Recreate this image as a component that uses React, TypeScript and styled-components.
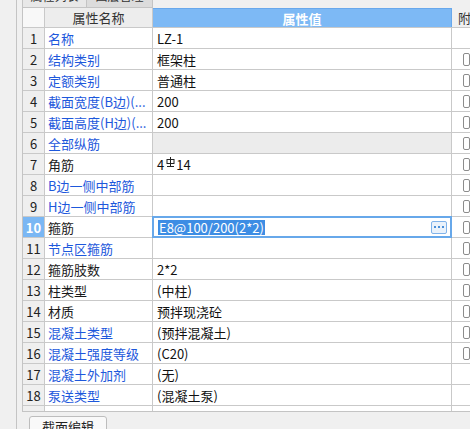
import { FC } from "react";

import styled, { createGlobalStyle, css } from "styled-components";

interface Attr {
  name: string;
  value?: string;
  isPublic?: boolean;
  hasCheck?: boolean;
  locked?: boolean;
  rebar?: boolean;
  editing?: boolean;
}

const attrs: Attr[] = [
  { name: "名称", value: "LZ-1", isPublic: true },
  { name: "结构类别", value: "框架柱", isPublic: true, hasCheck: true },
  { name: "定额类别", value: "普通柱", isPublic: true, hasCheck: true },
  { name: "截面宽度(B边)(...", value: "200", isPublic: true, hasCheck: true },
  { name: "截面高度(H边)(...", value: "200", isPublic: true, hasCheck: true },
  { name: "全部纵筋", isPublic: true, hasCheck: true, locked: true },
  { name: "角筋", value: "4", rebar: true, hasCheck: true },
  { name: "B边一侧中部筋", isPublic: true, hasCheck: true },
  { name: "H边一侧中部筋", isPublic: true, hasCheck: true },
  { name: "箍筋", value: "E8@100/200(2*2)", hasCheck: true, editing: true },
  { name: "节点区箍筋", isPublic: true, hasCheck: true },
  { name: "箍筋肢数", value: "2*2", hasCheck: true },
  { name: "柱类型", value: "(中柱)", hasCheck: true },
  { name: "材质", value: "预拌现浇砼", hasCheck: true },
  { name: "混凝土类型", value: "(预拌混凝土)", isPublic: true, hasCheck: true },
  { name: "混凝土强度等级", value: "(C20)", isPublic: true, hasCheck: true },
  { name: "混凝土外加剂", value: "(无)", isPublic: true },
  { name: "泵送类型", value: "(混凝土泵)", isPublic: true },
];

// HRB400 steel grade mark, not in any installed font
const RebarMark: FC = () => (
  <Mark width="9" height="10" viewBox="0 0 9 10">
    <rect x="1" y="2.5" width="7" height="4" fill="none" stroke="#222" strokeWidth="1" />
    <line x1="4.5" y1="0" x2="4.5" y2="9" stroke="#222" strokeWidth="1" />
    <line x1="1" y1="9.5" x2="8" y2="9.5" stroke="#222" strokeWidth="1" />
  </Mark>
);

const App: FC = () => {
  return (
    <>
      <GlobalStyle />
      <Page>
        <Gutter />
        <Main>
          <TabBar>
            <Tab active>属性列表</Tab>
            <Tab>图层管理</Tab>
          </TabBar>

          <Grid>
            <HeaderRow>
              <NumHead />
              <NameHead>属性名称</NameHead>
              <ValueHead>属性值</ValueHead>
              <CheckHead>附加</CheckHead>
            </HeaderRow>

            {attrs.map((attr, idx) => (
              <Row key={idx}>
                <NumCell active={attr.editing}>{idx + 1}</NumCell>
                <NameCell isPublic={attr.isPublic}>{attr.name}</NameCell>
                <ValueCell locked={attr.locked}>
                  {attr.editing ? (
                    <Editor>
                      <Selected>{attr.value}</Selected>
                      <MoreButton>
                        <i />
                        <i />
                        <i />
                      </MoreButton>
                    </Editor>
                  ) : (
                    <>
                      {attr.value}
                      {attr.rebar && (
                        <>
                          <RebarMark />
                          14
                        </>
                      )}
                    </>
                  )}
                </ValueCell>
                <CheckCell>{attr.hasCheck && <Checkbox />}</CheckCell>
              </Row>
            ))}

            <Row>
              <NumCell />
              <NameCell />
              <ValueCell />
              <CheckCell />
            </Row>
          </Grid>

          <Footer>
            <Button>截面编辑</Button>
          </Footer>
        </Main>
      </Page>
    </>
  );
};

const GlobalStyle = createGlobalStyle`
  html, body {
    margin: 0;
    padding: 0;
    width: 470px;
    height: 429px;
    overflow: hidden;
    background: #f0f0f0;
  }

  body {
    font-family: "Noto Sans CJK SC", "Microsoft YaHei", "Liberation Sans", sans-serif;
    font-size: 13px;
    color: #1a1a1a;
  }

  * {
    box-sizing: border-box;
  }
`;

const Page = styled.div`
  display: flex;
  width: 470px;
  height: 429px;
  overflow: hidden;
`;

const Gutter = styled.div`
  flex: none;
  width: 17px;
  border-right: 1px solid #c4c4c4;
`;

const Main = styled.div`
  flex: 1;
  min-width: 0;
  display: flex;
  flex-direction: column;
  padding-left: 5px;
`;

const TabBar = styled.div`
  flex: none;
  height: 8px;
  display: flex;
  align-items: flex-end;
  overflow: hidden;
`;

const Tab = styled.div<{ active?: boolean }>`
  flex: none;
  width: 66px;
  height: 24px;
  line-height: 22px;
  text-align: center;
  font-size: 12px;
  color: #333;
  border: 1px solid #c4c4c4;
  border-left: none;
  background: #dcdcdc;

  ${(props) =>
    props.active &&
    css`
      width: 65px;
      border-left: 1px solid #c4c4c4;
      background: #e8e8e8;
    `}
`;

const Grid = styled.div`
  flex: none;
  height: 404px;
  overflow: hidden;
  border-left: 1px solid #c4c4c4;
  border-bottom: 1px solid #c4c4c4;
  background: #fff;
`;

const Row = styled.div`
  display: flex;
  height: 21px;
  border-bottom: 1px solid #c9c9c9;
`;

const HeaderRow = styled(Row)`
  height: 20px;
`;

const cell = css`
  flex: none;
  display: flex;
  align-items: center;
  white-space: nowrap;
  overflow: hidden;
  border-right: 1px solid #c9c9c9;
`;

const NumHead = styled.div`
  ${cell}
  width: 22px;
  background: #f8f8f8;
`;

const NameHead = styled.div`
  ${cell}
  width: 108px;
  justify-content: center;
  background: #ededed;
  color: #333;
`;

const ValueHead = styled.div`
  ${cell}
  width: 299px;
  justify-content: center;
  background: #7db9f5;
  border-top: 1px solid #68a8ec;
  border-right-color: #68a8ec;
  color: #fff;
  font-weight: 700;
`;

const CheckHead = styled.div`
  ${cell}
  flex: 1;
  padding-left: 6px;
  background: #f0f0f0;
  border-right: none;
  color: #333;
`;

const NumCell = styled.div<{ active?: boolean }>`
  ${cell}
  width: 22px;
  justify-content: center;
  background: #efefef;
  color: #222;
  font-size: 13px;

  ${(props) =>
    props.active &&
    css`
      background: #7ab7f4;
      color: #fff;
      font-weight: 700;
    `}
`;

const NameCell = styled.div<{ isPublic?: boolean }>`
  ${cell}
  width: 108px;
  padding-left: 3px;
  color: ${(props) => (props.isPublic ? "#1d58dc" : "#1a1a1a")};
`;

const ValueCell = styled.div<{ locked?: boolean }>`
  ${cell}
  position: relative;
  overflow: visible;
  width: 299px;
  padding-left: 4px;
  color: #111;
  background: ${(props) => (props.locked ? "#ececec" : "#fff")};
`;

const Mark = styled.svg`
  align-self: flex-start;
  margin: 3px 1px 0 2px;
`;

const Editor = styled.div`
  position: absolute;
  z-index: 1;
  left: -1px;
  top: -1px;
  width: 300px;
  height: 22px;
  display: flex;
  align-items: center;
  padding: 0 3px 0 4px;
  border: 2px solid #67a8ea;
  background: #fff;
`;

const Selected = styled.span`
  line-height: 15px;
  padding: 0 1px;
  background: #3d8de4;
  color: #fff;
`;

const MoreButton = styled.span`
  margin-left: auto;
  width: 16px;
  height: 13px;
  display: flex;
  align-items: center;
  justify-content: center;
  gap: 2px;
  border: 1px solid #80b3ea;
  border-radius: 2px;
  background: #eaf2fb;

  i {
    width: 2px;
    height: 2px;
    background: #4a8fd8;
  }
`;

const CheckCell = styled.div`
  ${cell}
  flex: 1;
  padding-left: 11px;
  border-right: none;
`;

const Checkbox = styled.span`
  width: 13px;
  height: 13px;
  border: 1px solid #8c8c8c;
  border-radius: 2px;
  background: #fff;
`;

const Footer = styled.div`
  flex: none;
  padding: 4px 0 0 7px;
`;

const Button = styled.div`
  width: 78px;
  height: 22px;
  line-height: 20px;
  text-align: center;
  border: 1px solid #bdbdbd;
  border-radius: 3px;
  background: #f9f9f9;
  color: #222;
`;

export default App;
